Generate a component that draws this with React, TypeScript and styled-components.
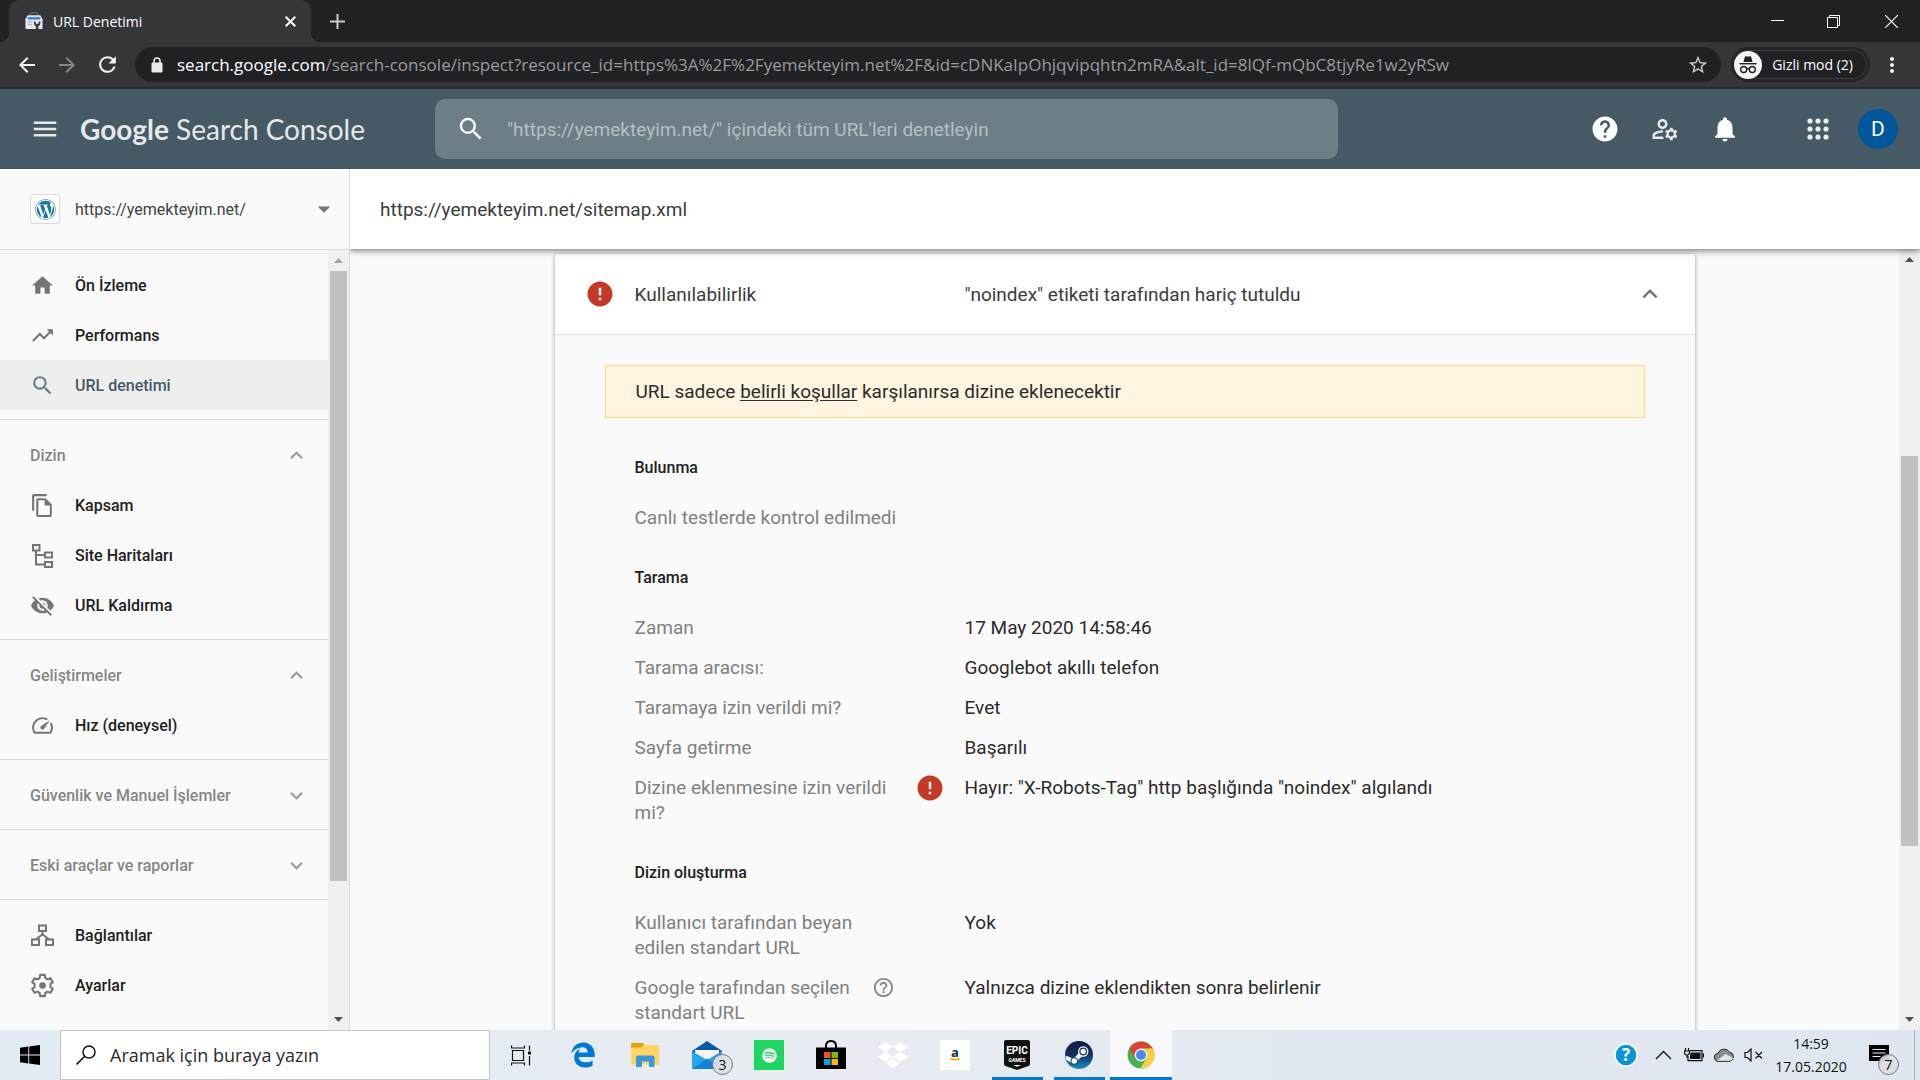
import React from 'react';
import styled, { createGlobalStyle } from 'styled-components';
import {
  MdArrowBack, MdArrowDropDown, MdArrowForward, MdError, MdExpandLess, MdExpandMore,
  MdHelp, MdHelpOutline, MdHome, MdMenu, MdMoreVert, MdNotifications,
  MdOutlineFileCopy, MdOutlineManageAccounts, MdRefresh, MdSearch, MdSpeed, MdStarBorder,
  MdTrendingUp, MdVisibilityOff,
} from 'react-icons/md';
import { FaDropbox, FaEdgeLegacy, FaSpotify, FaWordpress } from 'react-icons/fa';

const UI = '"Open Sans", "Noto Sans", sans-serif';
const ROBOTO = 'Roboto, "Liberation Sans", sans-serif';

const GlobalStyle = createGlobalStyle`
  * { box-sizing: border-box; }
  body { margin: 0; background: #fafafa; }
  button { border: 0; padding: 0; background: none; font: inherit; color: inherit; cursor: pointer; }
  a { color: inherit; text-decoration: none; }
  h1, h2, dl, dd, ul { margin: 0; padding: 0; }
  svg { display: block; flex: none; }
`;

const Screen = styled.div`
  display: flex;
  flex-direction: column;
  height: 100vh;
  overflow: hidden;
  font-family: ${ROBOTO};
`;

/* ---------- Browser chrome ---------- */

const TabStrip = styled.div`
  display: flex;
  align-items: center;
  height: 42px;
  flex: none;
  padding-left: 9px;
  background: #202124;
  color: #fff;
  font-family: ${UI};
`;

const Tab = styled.div`
  position: relative;
  display: flex;
  align-items: center;
  gap: 10px;
  width: 302px;
  height: 100%;
  padding: 0 11px 0 16px;
  border-radius: 10px 10px 0 0;
  background: #35363a;
  font-size: 14px;

  &::before,
  &::after {
    content: '';
    position: absolute;
    bottom: 0;
    width: 9px;
    height: 9px;
  }
  &::before { left: -9px; background: radial-gradient(circle at 0 0, #202124 9px, #35363a 9px); }
  &::after { right: -9px; background: radial-gradient(circle at 100% 0, #202124 9px, #35363a 9px); }
`;

const TabTitle = styled.span`
  flex: 1;
  white-space: nowrap;
`;

const StripButton = styled.button<{ $w: number }>`
  display: grid;
  place-items: center;
  width: ${p => p.$w}px;
  height: 34px;
`;

const WindowButtons = styled.div`
  display: flex;
  margin-left: auto;
`;

const Toolbar = styled.div`
  display: flex;
  align-items: center;
  height: 47px;
  flex: none;
  padding: 0 16px 0 7px;
  border-bottom: 2px solid #28292c;
  background: #35363a;
  color: #f1f3f4;
  font-family: ${UI};
`;

const NavButton = styled.button<{ $dim?: boolean }>`
  display: grid;
  place-items: center;
  width: 40px;
  height: 40px;
  && { color: ${p => (p.$dim ? '#85868a' : '#f1f3f4')}; }
`;

const Omnibox = styled.div`
  display: flex;
  align-items: center;
  flex: 1;
  height: 35px;
  margin-left: 8px;
  padding: 0 12px 0 16px;
  border-radius: 18px;
  background: #202124;
  font-size: 17px;
`;

const Host = styled.label`
  margin-left: 14px;
  color: #fff;
`;

const AddressInput = styled.input`
  flex: 1;
  min-width: 0;
  padding: 0;
  border: 0;
  outline: 0;
  background: transparent;
  font: inherit;
  color: #9a9b9e;
`;

const Incognito = styled.button`
  display: flex;
  align-items: center;
  gap: 10px;
  height: 35px;
  margin: 0 10px;
  border-radius: 18px;
  box-shadow: inset 0 0 0 1px #3c3d41;
  white-space: nowrap;
  && { padding: 0 14px 0 0; border: 3px solid #242528; background: #202124; font-size: 14px; color: #fff; }
`;

/* ---------- Console header ---------- */

const Header = styled.header`
  display: flex;
  align-items: center;
  height: 80px;
  flex: none;
  padding: 0 22px 0 30px;
  background: #455a64;
  color: #e6e9eb;
`;

const Brand = styled.a`
  width: 355px;
  margin-left: 20px;
  font-family: Lato, ${ROBOTO};
  font-size: 28px;
  white-space: nowrap;

  b { font-weight: 700; }
`;

const SearchBox = styled.label`
  display: flex;
  align-items: center;
  gap: 21px;
  flex: 0 1 903px;
  height: 60px;
  padding: 0 21px;
  border-radius: 10px;
  background: #6e7e86;
`;

const SearchInput = styled.input`
  flex: 1;
  min-width: 0;
  border: 0;
  padding: 0;
  outline: 0;
  background: transparent;
  font-family: ${ROBOTO};
  font-size: 19px;
  color: #fff;

  &::placeholder { color: #b7bfc3; opacity: 1; }
`;

const HeaderActions = styled.div`
  display: flex;
  align-items: center;
  gap: 30px;
  margin-left: auto;
  color: #fff;
`;

const AppsButton = styled.button`
  margin-left: 33px;
  && { color: #eceff0; }
`;

const Avatar = styled.button`
  width: 40px;
  height: 40px;
  margin-left: -5px;
  border-radius: 50%;
  && { background: #01579b; font-size: 21px; line-height: 40px; color: #fff; }
`;

/* ---------- Body ---------- */

const Body = styled.div`
  display: flex;
  flex: 1;
  min-height: 0;
  background: #fafafa;
`;

const Sidebar = styled.aside`
  display: flex;
  flex-direction: column;
  width: 350px;
  flex: none;
  border-right: 1px solid #dadada;
`;

const PropertyPicker = styled.button`
  display: flex;
  align-items: center;
  gap: 15px;
  height: 81px;
  flex: none;
  && { padding: 0 10px 0 30px; border-bottom: 1px solid #dadada; font-size: 16px; color: #424242; }
`;

const SiteIcon = styled.span`
  display: grid;
  place-items: center;
  width: 30px;
  height: 30px;
  border: 1px solid #dadada;
  border-radius: 3px;
  background: #fff;
  color: #1b76a3;
`;

const PropertyName = styled.span`
  flex: 1;
  text-align: left;
`;

const ScrollArea = styled.div`
  display: flex;
  flex: 1;
  min-height: 0;
`;

const NavList = styled.nav`
  flex: 1;
  min-width: 0;
  overflow: hidden;
`;

const NavGroup = styled.div`
  padding: 10px 0 9px;
  border-bottom: 1px solid #dadada;

  &:last-child { border-bottom: 0; }
`;

const NavItem = styled.a<{ $active?: boolean }>`
  display: flex;
  align-items: center;
  gap: 20px;
  height: 50px;
  padding-left: 30px;
  background: ${p => (p.$active ? '#eeeeee' : 'transparent')};
  color: ${p => (p.$active ? '#455a64' : '#212121')};
  font-size: 16px;
  font-weight: 500;

  svg { color: ${p => (p.$active ? '#607d8b' : '#757575')}; }
`;

const GroupToggle = styled.button`
  display: flex;
  align-items: center;
  justify-content: space-between;
  width: 100%;
  height: 50px;
  && { padding: 0 19px 0 30px; font-size: 16px; font-weight: 500; color: #858585; }

  svg { color: #9a9a9a; }
`;

const Bar = styled.div`
  display: flex;
  flex-direction: column;
  width: 21px;
  flex: none;
  padding: 0 2px;
  background: #f0f0f0;
`;

const BarArrow = styled.button<{ $color: string }>`
  display: grid;
  place-items: center;
  height: 21px;
  flex: none;
  && { color: ${p => p.$color}; }
`;

const BarSpace = styled.div<{ $share: number; $thumb?: boolean }>`
  flex: ${p => p.$share} 1 0;
  background: ${p => (p.$thumb ? '#c1c1c1' : 'transparent')};
`;

const Main = styled.main`
  display: flex;
  flex-direction: column;
  flex: 1;
  min-width: 0;
`;

const PageTitle = styled.h1`
  position: relative;
  z-index: 1;
  height: 80px;
  flex: none;
  padding: 0 30px;
  background: #fff;
  box-shadow: 0 2px 5px rgba(0, 0, 0, 0.42), 0 4px 10px rgba(0, 0, 0, 0.08);
  clip-path: inset(0 0 -20px 0);
  color: #3c3c3c;
  font-size: 19px;
  font-weight: 400;
  line-height: 82px;
`;

const Content = styled.div`
  flex: 1;
  min-width: 0;
  padding: 5px 20px 0;
  overflow: hidden;
`;

const Card = styled.section`
  max-width: 1140px;
  min-height: 900px;
  margin: 0 auto;
  border-radius: 3px;
  background: #fafafa;
  box-shadow: 0 1px 4px rgba(0, 0, 0, 0.38);
  font-size: 19px;
  line-height: 25px;
  color: #2b2b2b;
`;

const CardHeader = styled.button`
  display: grid;
  grid-template-columns: 50px 330px 1fr 30px;
  align-items: center;
  width: 100%;
  height: 81px;
  border-radius: 3px 3px 0 0;
  text-align: left;
  && { padding: 0 30px; border-bottom: 1px solid #e0e0e0; background: #fff; color: #3c3c3c; }
`;

const CardBody = styled.div`
  padding: 30px 50px;
`;

const Notice = styled.p`
  margin: 0 0 37px;
  padding: 13px 30px;
  border: 1px solid #fbd87c;
  background: #fff5e0;

  a { text-decoration: underline; text-underline-offset: 2px; }
`;

const Group = styled.div`
  padding: 0 30px;
  margin-bottom: 35px;
`;

const GroupTitle = styled.h2`
  margin-bottom: 25px;
  font-size: 16px;
  font-weight: 500;
  line-height: 25px;
  color: #212121;
`;

const Details = styled.dl`
  display: flex;
  flex-direction: column;
  gap: 15px;
`;

const Detail = styled.div`
  display: grid;
  grid-template-columns: 260px 70px 1fr;
`;

const Term = styled.dt`
  display: flex;
  justify-content: space-between;
  color: #808080;
`;

const Muted = styled.div`
  color: #808080;
`;

const Value = styled.dd`
  grid-column: 3;
`;

const Slot = styled.span`
  display: flex;
  align-items: center;
  justify-content: center;
  height: 25px;
`;

const red = '#c53929';

/* ---------- Taskbar ---------- */

const Taskbar = styled.footer`
  display: flex;
  height: 50px;
  flex: none;
  background: linear-gradient(90deg, #e2eaf3, #e8ecf2 45%, #e2e8f1 70%, #dee6f0);
  font-family: ${UI};
  color: #111;
`;

const StartButton = styled.button`
  display: grid;
  place-items: center;
  width: 60px;
`;

const TaskSearch = styled.label`
  display: flex;
  align-items: center;
  gap: 14px;
  width: 430px;
  padding: 0 15px;
  border: 1px solid #c6c6c6;
  background: #fff;
`;

const TaskInput = styled.input`
  flex: 1;
  min-width: 0;
  padding: 0;
  border: 0;
  outline: 0;
  background: none;
  font-family: ${UI};
  font-size: 18px;

  &::placeholder { color: #2b2b2b; opacity: 1; }
`;

const TaskButton = styled.button<{ $state?: 'open' | 'active' }>`
  position: relative;
  display: grid;
  place-items: center;
  width: 62px;
  && { background: ${p => (p.$state === 'active' ? '#f6f8fb' : 'none')}; }

  &::after {
    content: '';
    position: absolute;
    bottom: 0;
    left: ${p => (p.$state === 'active' ? 0 : 6)}px;
    right: ${p => (p.$state === 'active' ? 0 : 5)}px;
    height: 3px;
    background: ${p => (p.$state ? '#0078d7' : 'transparent')};
  }
`;

const Tile = styled.span<{ $bg: string }>`
  display: grid;
  place-items: center;
  width: 30px;
  height: 30px;
  background: ${p => p.$bg};
`;

const Count = styled.span`
  position: absolute;
  right: 5px;
  bottom: 5px;
  width: 21px;
  height: 21px;
  border: 1px solid #777;
  border-radius: 50%;
  background: rgba(222, 224, 227, 0.92);
  font-size: 14px;
  line-height: 19px;
  text-align: center;
`;

const Tray = styled.div`
  display: flex;
  align-items: center;
  margin-left: auto;
`;

const TrayButton = styled.button<{ $w: number }>`
  position: relative;
  display: grid;
  place-items: center;
  width: ${p => p.$w}px;
  height: 50px;
`;

const Clock = styled.time`
  width: 86px;
  font-size: 14px;
  line-height: 23px;
  text-align: center;
`;

const ShowDesktop = styled.button`
  width: 6px;
  height: 50px;
  margin-left: 10px;
  && { border-left: 1px solid #aab2bd; }
`;

/* ---------- Drawings ---------- */

const ConsoleFavicon = () => (
  <svg width="18" height="18" viewBox="0 0 20 20">
    <path d="M6 4V2.500Q6 1 7 1h6q1 0 1 1.500V4" fill="none" stroke="#5f6368" strokeWidth="1.400" />
    <path d="M3 3.500h14L19.500 8v10q0 1-1 1h-17q-1 0-1-1V8z" fill="#e8eaed" />
    <path d="M3 5.500h14v3H3z" fill="#4285f4" />
    <path d="M3 11h5M3 14h5" stroke="#bdc1c6" strokeWidth="2" />
    <path d="M10 10v3q0 2 2 2.500V19h3v-3.500q2-.5 2-2.500v-3l-2 1v2h-3v-2z" fill="#3c4043" />
  </svg>
);

const LockIcon = () => (
  <svg width="12" height="16" viewBox="0 0 12 16">
    <path d="M3 7V4q0-3 3-3t3 3v3" fill="none" stroke="#e8eaed" strokeWidth="1.600" />
    <rect x=".5" y="5.500" width="11" height="10" rx="1.200" fill="#e8eaed" />
  </svg>
);

const AppsIcon = () => (
  <svg width="30" height="30" viewBox="0 0 30 30" fill="currentColor">
    {[7, 15, 23].map(y => [7, 15, 23].map(x => <circle key={`${x}-${y}`} cx={x} cy={y} r="2.600" />))}
  </svg>
);

const IncognitoIcon = () => (
  <svg width="28" height="28" viewBox="0 0 28 28">
    <circle cx="14" cy="14" r="14" fill="#f1f3f4" />
    <path d="M9.500 11l1.300-5q.3-1 1.300-.7l1.900.5 1.900-.5q1-.3 1.300.7l1.300 5z" fill="#202124" />
    <path d="M5.500 12.700h17" stroke="#202124" strokeWidth="1.400" />
    <g fill="none" stroke="#202124" strokeWidth="1.400">
      <circle cx="9.700" cy="18.500" r="3" />
      <circle cx="18.300" cy="18.500" r="3" />
      <path d="M12.700 18q1.300-1 2.600 0" />
    </g>
  </svg>
);

const SitemapIcon = () => (
  <svg width="25" height="25" viewBox="0 0 25 25" fill="none" stroke="currentColor" strokeWidth="2">
    <path d="M3 2h6.500v5.500H3zM15 9.500h7v5h-7zM15 19h7v5h-7zM6 7.500v14h9M6 12h9" />
  </svg>
);

const LinksIcon = () => (
  <svg width="25" height="25" viewBox="0 0 25 25" fill="none" stroke="currentColor" strokeWidth="2">
    <path d="M9 2.500h7v5.500H9zM2 16.500h7V22H2zM16 16.500h7V22h-7zM12.500 8v4M5.500 16.500l7-5 7 5" />
  </svg>
);

const GearIcon = () => (
  <svg width="25" height="25" viewBox="0 0 24 24">
    <path
      d="M9.800 1.800h4.400l.5 3 2.200 1.300 2.800-1.100 2.200 3.800-2.300 1.900v2.600l2.300 1.900-2.200 3.800-2.800-1.100-2.200 1.300-.5 3H9.800l-.5-3-2.200-1.300-2.800 1.100-2.200-3.800 2.300-1.900v-2.600L2.100 8.800 4.300 5l2.800 1.100 2.200-1.300z"
      fill="none" stroke="currentColor" strokeWidth="2" strokeLinejoin="round"
    />
    <circle cx="12" cy="12" r="3.200" fill="currentColor" />
  </svg>
);

const Triangle = ({ down }: { down?: boolean }) => (
  <svg width="9" height="5" viewBox="0 0 9 5">
    <path d={down ? 'M0 0h9L4.500 5z' : 'M0 5h9L4.500 0z'} fill="currentColor" />
  </svg>
);

const WindowsLogo = () => (
  <svg width="20" height="20" viewBox="0 0 20 20">
    <path d="M0 2.800l8.300-1.200v8H0zM9.200 1.400L20 0v9.600H9.200zM0 10.500h8.300v8L0 17.300zM9.200 10.500H20V20L9.200 18.600z" fill="#000" />
  </svg>
);

const TaskSearchIcon = () => (
  <svg width="20" height="20" viewBox="0 0 20 20" fill="none" stroke="#111" strokeWidth="1.500">
    <circle cx="13" cy="7" r="6" />
    <path d="M8.700 11.300L.6 19.400" />
  </svg>
);

const TaskViewIcon = () => (
  <svg width="21" height="21" viewBox="0 0 21 21" fill="none" stroke="#111" strokeWidth="1.200">
    <path d="M1.500 5.500h11v10h-11zM.5.500v2.500h13V.5M.5 20.500V18h13v2.500M18.500.5v5M18.500 11v9.500" />
    <path d="M17 6.500h3v3h-3z" fill="#111" stroke="none" />
  </svg>
);

const FolderIcon = () => (
  <svg width="28" height="24" viewBox="0 0 28 24">
    <path d="M0 1q0-1 1-1h11l2 3v4H0z" fill="#e3a008" />
    <path d="M0 4.500h10l3-2.500h14q1 0 1 1v18.500H0z" fill="#ffd461" />
    <path d="M5 24V14.500q0-2 2-2h14.500q2 0 2 2V24H18v-5.500h-7V24z" fill="#3a96dd" />
  </svg>
);

const MailIcon = () => (
  <svg width="30" height="28" viewBox="0 0 30 28">
    <path d="M0 10L15 0l15 10v4H0z" fill="#0358a7" />
    <path d="M3 9h24v6l-12 8L3 15z" fill="#f3f3f3" />
    <path d="M0 10l15 9 15-9v18H0z" fill="#2aa5ea" />
    <path d="M0 28L15 17.500 30 28z" fill="#1283d8" />
  </svg>
);

const StoreIcon = () => (
  <svg width="30" height="30" viewBox="0 0 30 30">
    <path d="M10 9V6q0-5 5-5t5 5v3" fill="none" stroke="#000" strokeWidth="2" />
    <path d="M0 7.500h30V29H0z" fill="#000" />
    <path d="M8 12h6.500v6H8z" fill="#f25022" />
    <path d="M15.500 12H22v6h-6.500z" fill="#7fba00" />
    <path d="M8 19h6.500v6H8z" fill="#00a4ef" />
    <path d="M15.500 19H22v6h-6.500z" fill="#ffb900" />
  </svg>
);

const AmazonIcon = () => (
  <svg width="30" height="30" viewBox="0 0 30 30">
    <text x="15" y="17" textAnchor="middle" fontFamily="Open Sans" fontWeight="700" fontSize="13" fill="#232f3e">a</text>
    <path d="M10.500 18.500q4.500 2.500 9 0" fill="none" stroke="#f90" strokeWidth="1.500" />
  </svg>
);

const EpicIcon = () => (
  <svg width="26" height="30" viewBox="0 0 26 30">
    <path d="M2 0h22q2 0 2 2v22q0 1.500-1.500 2L13 30 1.500 26Q0 25.500 0 24V2q0-2 2-2z" fill="#111" />
    <text x="13" y="14" textAnchor="middle" fontFamily="Roboto" fontWeight="700" fontSize="10" fill="#fff">EPIC</text>
    <text x="13" y="21.500" textAnchor="middle" fontFamily="Roboto" fontWeight="700" fontSize="5" fill="#fff">GAMES</text>
    <path d="M9 25h8l-4 1.700z" fill="#fff" />
  </svg>
);

const SteamIcon = () => (
  <svg width="28" height="28" viewBox="0 0 28 28">
    <defs>
      <linearGradient id="steam" x1="0" y1="0" x2="0" y2="1">
        <stop offset="0" stopColor="#10193f" />
        <stop offset=".5" stopColor="#142f63" />
        <stop offset="1" stopColor="#1790c4" />
      </linearGradient>
    </defs>
    <circle cx="14" cy="14" r="14" fill="url(#steam)" />
    <path d="M.5 14.500l8 3.300L13 13l5-6 4 5-7 5-3.500 4-4 2-6.500-4.500z" fill="#fff" />
    <circle cx="18.200" cy="10.500" r="5.200" fill="#fff" />
    <circle cx="18.200" cy="10.500" r="3.300" fill="#fff" stroke="#16356b" strokeWidth="1.200" />
    <circle cx="9.300" cy="20" r="3.300" fill="#fff" stroke="#16457a" strokeWidth="1.100" />
  </svg>
);

const ChromeIcon = () => (
  <svg width="28" height="28" viewBox="0 0 48 48">
    <circle cx="24" cy="24" r="23" fill="#4caf50" />
    <path d="M24 1a23 23 0 0 1 20 12H24L14 29.800 4 12.600A23 23 0 0 1 24 1z" fill="#db4437" />
    <path d="M44 13a23 23 0 0 1-21.500 34L33.500 29.500 33 15z" fill="#ffcd40" />
    <path d="M24 13h20l-9 4z" fill="#ffcd40" />
    <circle cx="24" cy="24" r="11" fill="#f5f5f5" />
    <circle cx="24" cy="24" r="8.700" fill="#4a8af4" />
  </svg>
);

const BlueHelpIcon = () => (
  <svg width="24" height="24" viewBox="0 0 24 24">
    <circle cx="12" cy="12" r="12" fill="#fff" />
    <circle cx="12" cy="12" r="10.300" fill="#0a94d8" />
    <text x="12" y="18" textAnchor="middle" fontFamily="Open Sans" fontWeight="700" fontSize="17" fill="#fff">?</text>
  </svg>
);

const TrayCaret = () => (
  <svg width="17" height="10" viewBox="0 0 17 10" fill="none" stroke="#111" strokeWidth="1.300">
    <path d="M1 9l7.500-7.500L16 9" />
  </svg>
);

const BatteryIcon = () => (
  <svg width="20" height="14" viewBox="0 0 20 14" fill="none" stroke="#111" strokeWidth="1.200">
    <path d="M6 2.600h12v10H4V8M19.400 5.500v4" />
    <path d="M6.500 4.500h10v6.500H6V8z" fill="#111" stroke="none" />
    <path d="M1.500 0v3M4.500 0v3M.6 3h4.800v2.500L4 7H2L.6 5.500zM3 7v3" />
  </svg>
);

const CloudIcon = () => (
  <svg width="21" height="14" viewBox="0 0 21 14">
    <path d="M5 13.300a4 4 0 0 1-1-8A6.500 6.500 0 0 1 15.500 4 4.800 4.800 0 0 1 16 13.300z" fill="#8d8d8d" stroke="#222" />
    <path d="M3 12.500L11.500 6l7.500 4q-1 2.800-3 2.800H5z" fill="#e6e6e6" />
  </svg>
);

const MuteIcon = () => (
  <svg width="19" height="14" viewBox="0 0 19 14" fill="none" stroke="#111" strokeWidth="1.200">
    <path d="M1 4.500h2.500L7 1v12L3.500 9.500H1zM11.500 4l6.500 6.500M18 4l-6.500 6.500" />
  </svg>
);

const ActionCenterIcon = () => (
  <svg width="20" height="20" viewBox="0 0 20 20">
    <path d="M0 0h20v16h-6l-4 4v-4H0z" fill="#000" />
    <path d="M3.500 4.500h13M3.500 8h13M3.500 11.500h8" stroke="#e8ecf2" strokeWidth="1.200" />
  </svg>
);

/* ---------- Pieces ---------- */

function Scrollbar({ shares, up, down }: { shares: [number, number, number]; up: string; down: string }) {
  return (
    <Bar>
      <BarArrow $color={up} aria-label="Yukarı kaydır"><Triangle /></BarArrow>
      <BarSpace $share={shares[0]} />
      <BarSpace $share={shares[1]} $thumb />
      <BarSpace $share={shares[2]} />
      <BarArrow $color={down} aria-label="Aşağı kaydır"><Triangle down /></BarArrow>
    </Bar>
  );
}

type RowProps = { term: string; value: string; help?: boolean; error?: boolean };

function Row({ term, value, help, error }: RowProps) {
  return (
    <Detail>
      <Term>
        {term}
        {help && <Slot><MdHelpOutline size={23} color="#8a8a8a" /></Slot>}
      </Term>
      {error && <Slot><MdError size={30} color={red} /></Slot>}
      <Value>{value}</Value>
    </Detail>
  );
}

function Browser() {
  return (
    <>
      <TabStrip>
        <Tab>
          <ConsoleFavicon />
          <TabTitle>URL Denetimi</TabTitle>
          <StripButton $w={20} aria-label="Sekmeyi kapat">
            <svg width="11" height="11" viewBox="0 0 11 11" stroke="#fff" strokeWidth="2"><path d="M.7.7l9.600 9.600M10.300.7L.7 10.300" /></svg>
          </StripButton>
        </Tab>
        <StripButton $w={53} aria-label="Yeni sekme">
          <svg width="15" height="15" viewBox="0 0 15 15" stroke="#c8cacd" strokeWidth="2"><path d="M7.500 0v15M0 7.500h15" /></svg>
        </StripButton>
        <WindowButtons>
          <StripButton $w={56} aria-label="Simge durumuna küçült">
            <svg width="13" height="13" viewBox="0 0 13 13" stroke="#fff"><path d="M0 5.500h13" /></svg>
          </StripButton>
          <StripButton $w={57} aria-label="Önceki boyut">
            <svg width="13" height="13" viewBox="0 0 13 13" stroke="#fff" fill="none"><path d="M.5 2.500h10v10H.5zM2.500 2.500v-2h10v10h-2" /></svg>
          </StripButton>
          <StripButton $w={58} aria-label="Kapat">
            <svg width="13" height="13" viewBox="0 0 13 13" stroke="#fff" strokeWidth="1.200"><path d="M0 0l13 13M13 0L0 13" /></svg>
          </StripButton>
        </WindowButtons>
      </TabStrip>
      <Toolbar>
        <NavButton aria-label="Geri"><MdArrowBack size={24} /></NavButton>
        <NavButton $dim aria-label="İleri"><MdArrowForward size={24} /></NavButton>
        <NavButton aria-label="Yenile"><MdRefresh size={25} /></NavButton>
        <Omnibox>
          <LockIcon />
          <Host htmlFor="address">search.google.com</Host>
          <AddressInput
            id="address"
            readOnly
            value="/search-console/inspect?resource_id=https%3A%2F%2Fyemekteyim.net%2F&id=cDNKaIpOhjqvipqhtn2mRA&alt_id=8lQf-mQbC8tjyRe1w2yRSw"
          />
          <MdStarBorder size={22} color="#c8cacd" />
        </Omnibox>
        <Incognito><IncognitoIcon />Gizli mod (2)</Incognito>
        <button aria-label="Menü"><MdMoreVert size={24} /></button>
      </Toolbar>
    </>
  );
}

function ConsoleHeader() {
  return (
    <Header>
      <button aria-label="Ana menü"><MdMenu size={30} /></button>
      <Brand href="#"><b>Google</b> Search Console</Brand>
      <SearchBox>
        <MdSearch size={30} color="#f4f6f7" />
        <SearchInput type="text" placeholder={'"https://yemekteyim.net/" içindeki tüm URL\'leri denetleyin'} />
      </SearchBox>
      <HeaderActions>
        <button aria-label="Yardım"><MdHelp size={30} /></button>
        <button aria-label="Kullanıcı ayarları"><MdOutlineManageAccounts size={30} color="#e6e9eb" /></button>
        <button aria-label="Bildirimler"><MdNotifications size={30} /></button>
        <AppsButton aria-label="Uygulamalar"><AppsIcon /></AppsButton>
        <Avatar>D</Avatar>
      </HeaderActions>
    </Header>
  );
}

function SideNav() {
  return (
    <Sidebar>
      <PropertyPicker>
        <SiteIcon><FaWordpress size={21} /></SiteIcon>
        <PropertyName>https://yemekteyim.net/</PropertyName>
        <MdArrowDropDown size={30} color="#757575" />
      </PropertyPicker>
      <ScrollArea>
        <NavList>
          <NavGroup>
            <NavItem href="#"><MdHome size={25} />Ön İzleme</NavItem>
            <NavItem href="#"><MdTrendingUp size={25} />Performans</NavItem>
            <NavItem href="#" $active><MdSearch size={25} />URL denetimi</NavItem>
          </NavGroup>
          <NavGroup>
            <GroupToggle>Dizin<MdExpandLess size={25} /></GroupToggle>
            <NavItem href="#"><MdOutlineFileCopy size={25} />Kapsam</NavItem>
            <NavItem href="#"><SitemapIcon />Site Haritaları</NavItem>
            <NavItem href="#"><MdVisibilityOff size={25} />URL Kaldırma</NavItem>
          </NavGroup>
          <NavGroup>
            <GroupToggle>Geliştirmeler<MdExpandLess size={25} /></GroupToggle>
            <NavItem href="#"><MdSpeed size={25} />Hız (deneysel)</NavItem>
          </NavGroup>
          <NavGroup>
            <GroupToggle>Güvenlik ve Manuel İşlemler<MdExpandMore size={25} /></GroupToggle>
          </NavGroup>
          <NavGroup>
            <GroupToggle>Eski araçlar ve raporlar<MdExpandMore size={25} /></GroupToggle>
          </NavGroup>
          <NavGroup>
            <NavItem href="#"><LinksIcon />Bağlantılar</NavItem>
            <NavItem href="#"><GearIcon />Ayarlar</NavItem>
          </NavGroup>
        </NavList>
        <Scrollbar shares={[0, 610, 128]} up="#a3a3a3" down="#505050" />
      </ScrollArea>
    </Sidebar>
  );
}

function Inspection() {
  return (
    <Main>
      <PageTitle>https://yemekteyim.net/sitemap.xml</PageTitle>
      <ScrollArea>
        <Content>
          <Card>
            <CardHeader>
              <MdError size={30} color={red} />
              <span>Kullanılabilirlik</span>
              <span>"noindex" etiketi tarafından hariç tutuldu</span>
              <MdExpandLess size={30} color="#757575" />
            </CardHeader>
            <CardBody>
              <Notice>URL sadece <a href="#">belirli koşullar</a> karşılanırsa dizine eklenecektir</Notice>
              <Group>
                <GroupTitle>Bulunma</GroupTitle>
                <Muted>Canlı testlerde kontrol edilmedi</Muted>
              </Group>
              <Group>
                <GroupTitle>Tarama</GroupTitle>
                <Details>
                  <Row term="Zaman" value="17 May 2020 14:58:46" />
                  <Row term="Tarama aracısı:" value="Googlebot akıllı telefon" />
                  <Row term="Taramaya izin verildi mi?" value="Evet" />
                  <Row term="Sayfa getirme" value="Başarılı" />
                  <Row term="Dizine eklenmesine izin verildi mi?" value={'Hayır: "X-Robots-Tag" http başlığında "noindex" algılandı'} error />
                </Details>
              </Group>
              <Group>
                <GroupTitle>Dizin oluşturma</GroupTitle>
                <Details>
                  <Row term="Kullanıcı tarafından beyan edilen standart URL" value="Yok" />
                  <Row term="Google tarafından seçilen standart URL" value="Yalnızca dizine eklendikten sonra belirlenir" help />
                </Details>
              </Group>
            </CardBody>
          </Card>
        </Content>
        <Scrollbar shares={[186, 389, 163]} up="#505050" down="#505050" />
      </ScrollArea>
    </Main>
  );
}

function WindowsTaskbar() {
  return (
    <Taskbar>
      <StartButton aria-label="Başlat"><WindowsLogo /></StartButton>
      <TaskSearch>
        <TaskSearchIcon />
        <TaskInput type="text" placeholder="Aramak için buraya yazın" />
      </TaskSearch>
      <TaskButton aria-label="Görev görünümü"><TaskViewIcon /></TaskButton>
      <TaskButton aria-label="Edge"><FaEdgeLegacy size={26} color="#0078d7" /></TaskButton>
      <TaskButton aria-label="Dosya Gezgini"><FolderIcon /></TaskButton>
      <TaskButton aria-label="Posta"><MailIcon /><Count>3</Count></TaskButton>
      <TaskButton aria-label="Spotify"><Tile $bg="#1ed760"><FaSpotify size={15} color="#fff" /></Tile></TaskButton>
      <TaskButton aria-label="Mağaza"><StoreIcon /></TaskButton>
      <TaskButton aria-label="Dropbox"><FaDropbox size={30} color="#fff" /></TaskButton>
      <TaskButton aria-label="Amazon"><Tile $bg="#fff"><AmazonIcon /></Tile></TaskButton>
      <TaskButton aria-label="Epic Games" $state="open"><EpicIcon /></TaskButton>
      <TaskButton aria-label="Steam" $state="open"><SteamIcon /></TaskButton>
      <TaskButton aria-label="Chrome" $state="active"><ChromeIcon /></TaskButton>
      <Tray>
        <TrayButton $w={42} aria-label="Yardım al"><BlueHelpIcon /></TrayButton>
        <TrayButton $w={32} aria-label="Gizli simgeler"><TrayCaret /></TrayButton>
        <TrayButton $w={30} aria-label="Pil"><BatteryIcon /></TrayButton>
        <TrayButton $w={30} aria-label="OneDrive"><CloudIcon /></TrayButton>
        <TrayButton $w={29} aria-label="Ses kapalı"><MuteIcon /></TrayButton>
        <Clock>14:59<br />17.05.2020</Clock>
        <TrayButton $w={50} aria-label="Bildirimler"><ActionCenterIcon /><Count>7</Count></TrayButton>
        <ShowDesktop aria-label="Masaüstünü göster" />
      </Tray>
    </Taskbar>
  );
}

export default function App() {
  return (
    <Screen>
      <GlobalStyle />
      <Browser />
      <ConsoleHeader />
      <Body>
        <SideNav />
        <Inspection />
      </Body>
      <WindowsTaskbar />
    </Screen>
  );
}
